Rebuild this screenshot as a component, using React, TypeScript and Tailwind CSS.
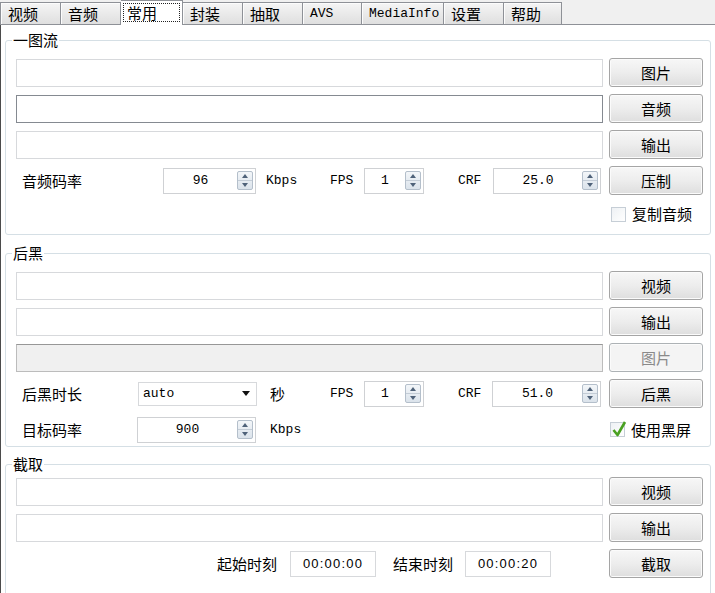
import React from 'react';

const MONO = "font-['Liberation_Mono','Courier_New',monospace] text-[13px]";
const TIME = "font-['Liberation_Sans',Arial,sans-serif] text-[13px] tracking-[1.2px]";

const tabs = [
  { label: '视频', w: 'w-[61px]' },
  { label: '音频', w: 'w-[60px]' },
  { label: '常用', w: 'w-[62px]', active: true },
  { label: '封装', w: 'w-[60px]' },
  { label: '抽取', w: 'w-[60px]' },
  { label: 'AVS', w: 'w-[59px]', mono: true },
  { label: 'MediaInfo', w: 'w-[82px]', mono: true },
  { label: '设置', w: 'w-[60px]' },
  { label: '帮助', w: 'w-[58px]' },
];

function TabBar() {
  return (
    <div className="flex h-[25px] items-end bg-[#f0f0f0]">
      {tabs.map((t, i) =>
        t.active ? (
          <div key={t.label} className={`flex h-[25px] shrink-0 border-t border-r border-[#8e9197] bg-white px-[2px] pt-[2px] pb-[3px] ${t.w}`}>
            <div className="flex flex-1 items-center border border-dotted border-[#222] pl-[3px]">{t.label}</div>
          </div>
        ) : (
          <div
            key={t.label}
            className={`flex h-[23px] shrink-0 items-center border-t border-r border-b border-[#8e9197] bg-linear-to-b from-[#f5f5f5] to-[#dfdfdf] pl-[7px] shadow-[inset_1px_1px_0_#fcfcfc] ${t.w} ${i === 0 ? 'border-l' : ''} ${t.mono ? MONO : ''}`}
          >
            {t.label}
          </div>
        )
      )}
      <div className="h-[1px] flex-1 bg-[#8e9197]" />
    </div>
  );
}

function Field({ focused, disabled }: { focused?: boolean; disabled?: boolean }) {
  const tone = focused
    ? 'border-[#858a91] bg-white'
    : disabled
    ? 'border-[#bcbcbc] border-t-[#979797] bg-[#f0f0f0]'
    : 'border-[#d7d9dc] bg-white';
  return <div className={`h-[28px] flex-1 border ${tone}`} />;
}

function Btn({ label, disabled }: { label: string; disabled?: boolean }) {
  return (
    <div
      className={`flex h-[29px] w-[94px] shrink-0 items-center justify-center rounded-[3px] border shadow-[inset_0_0_0_1px_#fbfbfb] ${
        disabled
          ? 'border-[#adb2b5] bg-[#f4f4f4] text-[#8a8a8a]'
          : 'border-[#a5a5a5] bg-linear-to-b from-[#f7f7f7] via-[#ededed] to-[#dedede] text-black'
      }`}
    >
      {label}
    </div>
  );
}

function SpinArrows() {
  return (
    <div className="mr-[2px] flex h-[19px] w-[16px] shrink-0 flex-col overflow-hidden rounded-[2px] border border-[#b4bfcb] bg-linear-to-b from-[#f3f6f9] to-[#dbe3eb]">
      <div className="flex flex-1 items-center justify-center border-b border-[#c3ccd6]">
        <svg width="6" height="4" viewBox="0 0 6 4">
          <path d="M0 4L3 0L6 4Z" fill="#4f6279" />
        </svg>
      </div>
      <div className="flex flex-1 items-center justify-center">
        <svg width="6" height="4" viewBox="0 0 6 4">
          <path d="M0 0L3 4L6 0Z" fill="#4f6279" />
        </svg>
      </div>
    </div>
  );
}

function Spin({ value, className }: { value: string; className: string }) {
  return (
    <div className={`flex h-[26px] shrink-0 items-center border border-[#cfd1d4] bg-white ${className}`}>
      <span className={`${MONO} flex-1 text-center`}>{value}</span>
      <SpinArrows />
    </div>
  );
}

function Check({ label, checked }: { label: string; checked?: boolean }) {
  return (
    <div className="flex items-center">
      <div className="relative h-[15px] w-[15px] shrink-0 border border-[#c6ced6] bg-linear-to-br from-[#eef1f4] to-white">
        {checked && (
          <svg className="absolute -top-[3px] left-[0px]" width="16" height="17" viewBox="0 0 16 17">
            <path d="M2.5 10L6.5 15L14 2" fill="none" stroke="#49a021" strokeWidth="2.6" strokeLinejoin="round" />
          </svg>
        )}
      </div>
      <span className="ml-[6px]">{label}</span>
    </div>
  );
}

function Row({ children }: { children: React.ReactNode }) {
  return <div className="flex h-[29px] items-center gap-[6px]">{children}</div>;
}

function Group({ title, className, children }: { title: string; className: string; children: React.ReactNode }) {
  return (
    <fieldset className={`mx-[4px] min-w-0 rounded-[3px] border border-[#d5dfe5] ${className}`}>
      <legend className="ml-[6px] px-[1px] leading-[20px]">{title}</legend>
      {children}
    </fieldset>
  );
}

export default function App() {
  return (
    <div className="h-[593px] w-[715px] overflow-hidden bg-white font-['Noto_Sans_CJK_SC',sans-serif] text-[15px] leading-[20px] text-black">
      <TabBar />
      <div className="flex flex-col border-l border-[#4b4b4b] pb-[20px]">
        <Group title="一图流" className="mt-[5px]">
          <div className="flex flex-col gap-[7px] pt-[8px] pr-[7px] pb-[9px] pl-[10px]">
            <Row>
              <Field />
              <Btn label="图片" />
            </Row>
            <Row>
              <Field focused />
              <Btn label="音频" />
            </Row>
            <Row>
              <Field />
              <Btn label="输出" />
            </Row>
            <Row>
              <div className="flex flex-1 items-center">
                <span className="w-[147px] shrink-0 pl-[6px]">音频码率</span>
                <Spin value="96" className="w-[93px]" />
                <span className={`${MONO} ml-[10px] w-[64px]`}>Kbps</span>
                <span className={`${MONO} w-[34px]`}>FPS</span>
                <Spin value="1" className="w-[60px]" />
                <span className={`${MONO} ml-[34px] w-[35px]`}>CRF</span>
                <Spin value="25.0" className="w-[108px]" />
              </div>
              <Btn label="压制" />
            </Row>
            <div className="mt-[1px] flex h-[22px] items-center justify-end">
              <div className="w-[94px] pl-[2px]">
                <Check label="复制音频" />
              </div>
            </div>
          </div>
        </Group>

        <Group title="后黑" className="mt-[8px]">
          <div className="flex flex-col gap-[7px] pt-[8px] pr-[7px] pb-[2px] pl-[10px]">
            <Row>
              <Field />
              <Btn label="视频" />
            </Row>
            <Row>
              <Field />
              <Btn label="输出" />
            </Row>
            <Row>
              <Field disabled />
              <Btn label="图片" disabled />
            </Row>
            <Row>
              <div className="flex flex-1 items-center">
                <span className="w-[122px] shrink-0 pl-[6px]">后黑时长</span>
                <div className="flex h-[24px] w-[119px] shrink-0 items-center justify-between border border-[#d7d9dc] bg-white pr-[6px] pl-[4px]">
                  <span className={MONO}>auto</span>
                  <svg width="8" height="5" viewBox="0 0 8 5">
                    <path d="M0 0H8L4 5Z" fill="#111" />
                  </svg>
                </div>
                <span className="ml-[13px] w-[60px]">秒</span>
                <span className={`${MONO} w-[34px]`}>FPS</span>
                <Spin value="1" className="w-[60px]" />
                <span className={`${MONO} ml-[34px] w-[34px]`}>CRF</span>
                <Spin value="51.0" className="w-[109px]" />
              </div>
              <Btn label="后黑" />
            </Row>
            <Row>
              <div className="flex flex-1 items-center">
                <span className="w-[121px] shrink-0 pl-[6px]">目标码率</span>
                <Spin value="900" className="w-[119px]" />
                <span className={`${MONO} ml-[14px]`}>Kbps</span>
              </div>
              <div className="w-[94px] pl-[1px]">
                <Check label="使用黑屏" checked />
              </div>
            </Row>
          </div>
        </Group>

        <Group title="截取" className="mt-[7px]">
          <div className="flex flex-col gap-[7px] pt-[3px] pr-[7px] pb-[20px] pl-[10px]">
            <Row>
              <Field />
              <Btn label="视频" />
            </Row>
            <Row>
              <Field />
              <Btn label="输出" />
            </Row>
            <Row>
              <div className="flex flex-1 items-center">
                <span className="ml-[201px] w-[73px] shrink-0">起始时刻</span>
                <div className={`flex h-[26px] w-[86px] shrink-0 items-center justify-center border border-[#d7d9dc] bg-white ${TIME}`}>00:00:00</div>
                <span className="ml-[17px] w-[72px] shrink-0">结束时刻</span>
                <div className={`flex h-[26px] w-[86px] shrink-0 items-center justify-center border border-[#d7d9dc] bg-white ${TIME}`}>00:00:20</div>
              </div>
              <Btn label="截取" />
            </Row>
          </div>
        </Group>
      </div>
    </div>
  );
}
